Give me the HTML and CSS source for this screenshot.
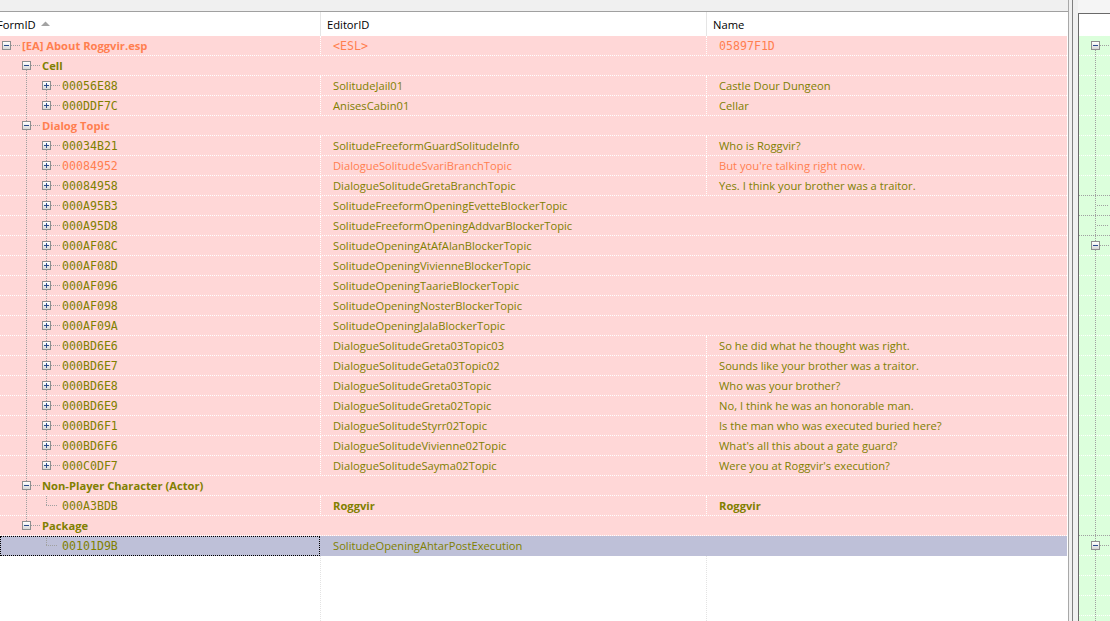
FILE: index.html
```html
<!DOCTYPE html>
<html>
<head>
<meta charset="utf-8">
<title>xEdit</title>
<link rel="stylesheet" href="styles.css">
</head>
<body>
<div class="left">
  <div class="topbar"></div>
  <div class="tree">
    <div class="hdr">
      <div class="hc hc1"><span class="htxt">FormID</span><svg class="sort" width="9" height="5" viewBox="0 0 9 5"><path d="M0 5 L4.5 0.5 L9 5 Z" fill="#a3a3a3"/></svg></div>
      <div class="hc hc2">EditorID</div>
      <div class="hc hc3">Name</div>
    </div>
    <div class="rows">
      <div class="row c"><div class="c1"><span class="g h"><i class="b m"></i></span><span class="t grp">[EA] About Roggvir.esp</span></div><div class="c2 d f">&lt;ESL&gt;</div><div class="c3 d f">05897F1D</div></div>
      <div class="row o"><div class="c1"><span class="g"></span><span class="g vb h"><i class="b m"></i></span><span class="t grp">Cell</span></div><div class="c2"></div><div class="c3"></div></div>
      <div class="row o"><div class="c1"><span class="g"></span><span class="g v"></span><span class="g vb h"><i class="b p"></i></span><span class="t f">00056E88</span></div><div class="c2 d">SolitudeJail01</div><div class="c3 d">Castle Dour Dungeon</div></div>
      <div class="row o"><div class="c1"><span class="g"></span><span class="g v"></span><span class="g vt h"><i class="b p"></i></span><span class="t f">000DDF7C</span></div><div class="c2 d">AnisesCabin01</div><div class="c3 d">Cellar</div></div>
      <div class="row c"><div class="c1"><span class="g"></span><span class="g v h"><i class="b m"></i></span><span class="t grp">Dialog Topic</span></div><div class="c2"></div><div class="c3"></div></div>
      <div class="row o"><div class="c1"><span class="g"></span><span class="g v"></span><span class="g vb h"><i class="b p"></i></span><span class="t f">00034B21</span></div><div class="c2 d">SolitudeFreeformGuardSolitudeInfo</div><div class="c3 d">Who is Roggvir?</div></div>
      <div class="row c"><div class="c1"><span class="g"></span><span class="g v"></span><span class="g v h"><i class="b p"></i></span><span class="t f">00084952</span></div><div class="c2 d">DialogueSolitudeSvariBranchTopic</div><div class="c3 d">But you're talking right now.</div></div>
      <div class="row o"><div class="c1"><span class="g"></span><span class="g v"></span><span class="g v h"><i class="b p"></i></span><span class="t f">00084958</span></div><div class="c2 d">DialogueSolitudeGretaBranchTopic</div><div class="c3 d">Yes. I think your brother was a traitor.</div></div>
      <div class="row o"><div class="c1"><span class="g"></span><span class="g v"></span><span class="g v h"><i class="b p"></i></span><span class="t f">000A95B3</span></div><div class="c2 d">SolitudeFreeformOpeningEvetteBlockerTopic</div><div class="c3"></div></div>
      <div class="row o"><div class="c1"><span class="g"></span><span class="g v"></span><span class="g v h"><i class="b p"></i></span><span class="t f">000A95D8</span></div><div class="c2 d">SolitudeFreeformOpeningAddvarBlockerTopic</div><div class="c3"></div></div>
      <div class="row o"><div class="c1"><span class="g"></span><span class="g v"></span><span class="g v h"><i class="b p"></i></span><span class="t f">000AF08C</span></div><div class="c2 d">SolitudeOpeningAtAfAlanBlockerTopic</div><div class="c3"></div></div>
      <div class="row o"><div class="c1"><span class="g"></span><span class="g v"></span><span class="g v h"><i class="b p"></i></span><span class="t f">000AF08D</span></div><div class="c2 d">SolitudeOpeningVivienneBlockerTopic</div><div class="c3"></div></div>
      <div class="row o"><div class="c1"><span class="g"></span><span class="g v"></span><span class="g v h"><i class="b p"></i></span><span class="t f">000AF096</span></div><div class="c2 d">SolitudeOpeningTaarieBlockerTopic</div><div class="c3"></div></div>
      <div class="row o"><div class="c1"><span class="g"></span><span class="g v"></span><span class="g v h"><i class="b p"></i></span><span class="t f">000AF098</span></div><div class="c2 d">SolitudeOpeningNosterBlockerTopic</div><div class="c3"></div></div>
      <div class="row o"><div class="c1"><span class="g"></span><span class="g v"></span><span class="g v h"><i class="b p"></i></span><span class="t f">000AF09A</span></div><div class="c2 d">SolitudeOpeningJalaBlockerTopic</div><div class="c3"></div></div>
      <div class="row o"><div class="c1"><span class="g"></span><span class="g v"></span><span class="g v h"><i class="b p"></i></span><span class="t f">000BD6E6</span></div><div class="c2 d">DialogueSolitudeGreta03Topic03</div><div class="c3 d">So he did what he thought was right.</div></div>
      <div class="row o"><div class="c1"><span class="g"></span><span class="g v"></span><span class="g v h"><i class="b p"></i></span><span class="t f">000BD6E7</span></div><div class="c2 d">DialogueSolitudeGeta03Topic02</div><div class="c3 d">Sounds like your brother was a traitor.</div></div>
      <div class="row o"><div class="c1"><span class="g"></span><span class="g v"></span><span class="g v h"><i class="b p"></i></span><span class="t f">000BD6E8</span></div><div class="c2 d">DialogueSolitudeGreta03Topic</div><div class="c3 d">Who was your brother?</div></div>
      <div class="row o"><div class="c1"><span class="g"></span><span class="g v"></span><span class="g v h"><i class="b p"></i></span><span class="t f">000BD6E9</span></div><div class="c2 d">DialogueSolitudeGreta02Topic</div><div class="c3 d">No, I think he was an honorable man.</div></div>
      <div class="row o"><div class="c1"><span class="g"></span><span class="g v"></span><span class="g v h"><i class="b p"></i></span><span class="t f">000BD6F1</span></div><div class="c2 d">DialogueSolitudeStyrr02Topic</div><div class="c3 d">Is the man who was executed buried here?</div></div>
      <div class="row o"><div class="c1"><span class="g"></span><span class="g v"></span><span class="g v h"><i class="b p"></i></span><span class="t f">000BD6F6</span></div><div class="c2 d">DialogueSolitudeVivienne02Topic</div><div class="c3 d">What's all this about a gate guard?</div></div>
      <div class="row o"><div class="c1"><span class="g"></span><span class="g v"></span><span class="g vt h"><i class="b p"></i></span><span class="t f">000C0DF7</span></div><div class="c2 d">DialogueSolitudeSayma02Topic</div><div class="c3 d">Were you at Roggvir's execution?</div></div>
      <div class="row o"><div class="c1"><span class="g"></span><span class="g v h"><i class="b m"></i></span><span class="t grp">Non-Player Character (Actor)</span></div><div class="c2"></div><div class="c3"></div></div>
      <div class="row o"><div class="c1"><span class="g"></span><span class="g v"></span><span class="g vt hl"></span><span class="t f">000A3BDB</span></div><div class="c2 d grp">Roggvir</div><div class="c3 d grp">Roggvir</div></div>
      <div class="row o"><div class="c1"><span class="g"></span><span class="g vt h"><i class="b m"></i></span><span class="t grp">Package</span></div><div class="c2"></div><div class="c3"></div></div>
      <div class="row o sel"><div class="c1"><span class="g"></span><span class="g"></span><span class="g vt hl"></span><span class="t f">00101D9B</span></div><div class="c2">SolitudeOpeningAhtarPostExecution</div><div class="c3"></div></div>
    </div>
    <div class="fill"></div>
  </div>
</div>
<div class="split"></div>
<div class="rwrap">
  <div class="rp">
    <div class="rh"></div>
    <div class="rrow"><span class="g vb h"><i class="b m"></i></span></div>
    <div class="rrow"><span class="g v"></span></div>
    <div class="rrow"><span class="g v"></span></div>
    <div class="rrow"><span class="g v"></span></div>
    <div class="rrow"><span class="g v"></span></div>
    <div class="rrow"><span class="g v"></span></div>
    <div class="rrow"><span class="g v"></span></div>
    <div class="rrow gs"><span class="g v"></span></div>
    <div class="rrow gs"><span class="g v hs"></span></div>
    <div class="rrow gs"><span class="g v hs"></span></div>
    <div class="rrow"><span class="g v h"><i class="b m"></i></span></div>
    <div class="rrow"><span class="g v"></span></div>
    <div class="rrow"><span class="g v"></span></div>
    <div class="rrow"><span class="g v"></span></div>
    <div class="rrow"><span class="g v"></span></div>
    <div class="rrow"><span class="g v"></span></div>
    <div class="rrow"><span class="g v"></span></div>
    <div class="rrow"><span class="g v"></span></div>
    <div class="rrow"><span class="g v"></span></div>
    <div class="rrow"><span class="g v"></span></div>
    <div class="rrow"><span class="g v"></span></div>
    <div class="rrow"><span class="g v"></span></div>
    <div class="rrow"><span class="g v"></span></div>
    <div class="rrow"><span class="g v"></span></div>
    <div class="rrow gs"><span class="g v"></span></div>
    <div class="rrow"><span class="g v h"><i class="b m"></i></span></div>
    <div class="rrow"><span class="g v"></span></div>
    <div class="rrow"><span class="g v"></span></div>
    <div class="rrow"><span class="g v"></span></div>
    <div class="rrow"><span class="g v"></span></div>
  </div>
</div>
</body>
</html>
```
FILE: styles.css
```css
* { box-sizing: border-box; margin: 0; padding: 0; }
html, body { width: 1110px; height: 621px; overflow: hidden; }
body {
  display: flex;
  background: #f0f0f0;
  font: 11.2px "Open Sans", "Liberation Sans", sans-serif;
  color: #000;
}
.left {
  width: 1069px;
  flex: none;
  display: flex;
  flex-direction: column;
  border-right: 1px solid #a8a8a8;
}
.topbar { height: 11px; flex: none; }
.tree {
  flex: 1;
  min-height: 0;
  display: flex;
  flex-direction: column;
  border-top: 1px solid #a0a0a0;
  background: #fff;
}
.hdr { width: 1067px; height: 24px; flex: none; display: flex; }
.hc { line-height: 23px; padding-top: 1px; white-space: nowrap; }
.hc1 { width: 320px; flex: none; display: flex; align-items: center; }
.htxt { margin-left: -3px; }
.sort { margin-left: 5px; margin-top: -3px; }
.hc2 { width: 386px; flex: none; border-left: 1px solid #e5e5e5; padding-left: 6px; }
.hc3 { flex: 1; border-left: 1px solid #e5e5e5; padding-left: 6px; }

.rows { width: 1067px; flex: none; }
.row {
  height: 20px;
  display: flex;
  line-height: 19px;
  white-space: nowrap;
  background: repeating-linear-gradient(to right, #fff 0 1px, transparent 1px 2px) 0 19px / 100% 1px no-repeat, #ffd7d7;
}
.row.sel { background: #bec0d8; }
.sel .c1 { outline: 1px dotted #000; outline-offset: -1px; }
.c1 { width: 320px; flex: none; display: flex; }
.c2 { width: 386px; flex: none; border-left: 1px dotted transparent; padding-left: 12px; }
.c3 { flex: 1; border-left: 1px dotted transparent; padding-left: 12px; }
.d { border-left-color: #fff; }
.t { margin-left: 2px; }
.f { font-family: "DejaVu Sans Mono", "Liberation Mono", monospace; font-size: 11.6px; line-height: 20px; }
.grp { font-weight: bold; }
.o { color: #808000; }
.c { color: #ff7f50; }

.g {
  display: block;
  width: 20px;
  height: 20px;
  flex: none;
  padding: 5px 0 0 2px;
  background: var(--h, none), var(--v, none);
}
.v { --v: repeating-linear-gradient(#a0a0a0 0 1px, transparent 1px 2px) 6px 0 / 1px 20px no-repeat; }
.vt { --v: repeating-linear-gradient(#a0a0a0 0 1px, transparent 1px 2px) 6px 0 / 1px 10px no-repeat; }
.vb { --v: repeating-linear-gradient(#a0a0a0 0 1px, transparent 1px 2px) 6px 10px / 1px 10px no-repeat; }
.h { --h: repeating-linear-gradient(to right, #a0a0a0 0 1px, transparent 1px 2px) 11px 9px / 9px 1px no-repeat; }
.hl { --h: repeating-linear-gradient(to right, #a0a0a0 0 1px, transparent 1px 2px) 6px 9px / 12px 1px no-repeat; }
.hs { --h: repeating-linear-gradient(to right, #a0a0a0 0 1px, transparent 1px 2px) 8px 9px / 11px 1px no-repeat; }

.b {
  display: block;
  width: 9px;
  height: 9px;
  border: 1px solid #8f8f8f;
}
.m {
  background: linear-gradient(#2a4a8c, #2a4a8c) center / 5px 1px no-repeat, linear-gradient(#fff, #d8d8d8);
}
.p {
  background: linear-gradient(#2a4a8c, #2a4a8c) center / 5px 1px no-repeat, linear-gradient(#2a4a8c, #2a4a8c) center / 1px 5px no-repeat, linear-gradient(#fff, #d8d8d8);
}

.fill {
  width: 1067px;
  flex: 1;
  background:
    repeating-linear-gradient(#e3e3e3 0 1px, transparent 1px 2px) 320px 0 / 1px 100% no-repeat,
    repeating-linear-gradient(#e3e3e3 0 1px, transparent 1px 2px) 706px 0 / 1px 100% no-repeat,
    #fff;
}

.split {
  width: 9px;
  flex: none;
  background: linear-gradient(#7f7f7f, #7f7f7f) 3px 0 / 1px 100% no-repeat, #f0f0f0;
}
.rwrap { flex: 1; min-width: 0; display: flex; background: #f5f5f5; }
.rp {
  flex: 1;
  min-width: 0;
  margin-top: 13px;
  border-top: 1px solid #6a6a6a;
  border-left: 1px solid #6a6a6a;
  background: #fff;
  display: flex;
  flex-direction: column;
  overflow: hidden;
}
.rh { height: 22px; flex: none; }
.rrow {
  height: 20px;
  flex: none;
  padding-left: 10px;
  background: repeating-linear-gradient(to right, #fff 0 1px, transparent 1px 2px) 0 19px / 100% 1px no-repeat, #dcffdc;
}
.rrow.gs {
  background: repeating-linear-gradient(to right, #a0a0a0 0 1px, transparent 1px 2px) 0 19px / 100% 1px no-repeat, #dcffdc;
}
```
